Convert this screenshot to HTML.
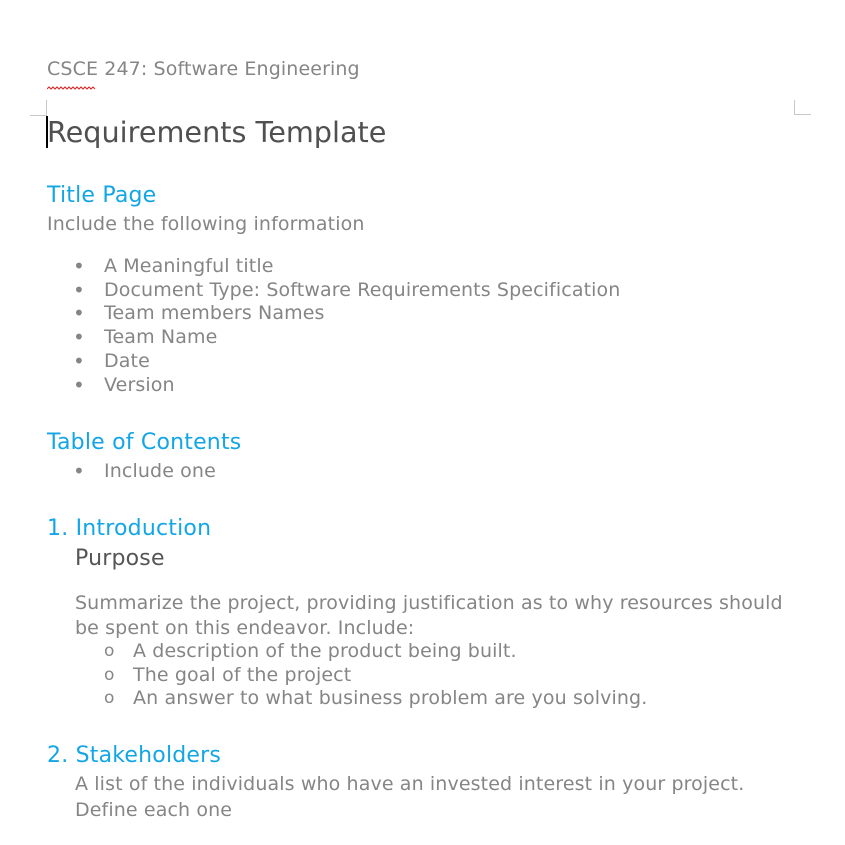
<!DOCTYPE html>
<html><head><meta charset="utf-8"><style>
html,body{margin:0;padding:0;background:#fff;width:845px;height:845px;overflow:hidden;position:relative}
div.t{position:absolute;white-space:nowrap;font-family:"DejaVu Sans","Liberation Sans",sans-serif;font-size:19px;letter-spacing:0.12px;line-height:24px;height:24px;color:#858585}
.h{color:#13a6e6!important;font-size:22px!important;letter-spacing:0.2px!important;line-height:28px!important;height:28px!important}
.b{font-size:20px!important;letter-spacing:0!important}
</style></head><body>
<div class="t" style="left:47px;top:57px">CSCE 247: Software Engineering</div>
<svg style="position:absolute;left:47px;top:85px" width="50" height="6"><path d="M0 4 L2 2 L4 4 L6 2 L8 4 L10 2 L12 4 L14 2 L16 4 L18 2 L20 4 L22 2 L24 4 L26 2 L28 4 L30 2 L32 4 L34 2 L36 4 L38 2 L40 4 L42 2 L44 4 L46 2 L48 4" stroke="#e02020" stroke-width="1" fill="none"/></svg>
<div style="position:absolute;left:46px;top:100px;width:1px;height:16px;background:#c8c8c8"></div>
<div style="position:absolute;left:30px;top:115px;width:16px;height:1px;background:#c8c8c8"></div>
<div style="position:absolute;left:794px;top:100px;width:1px;height:15px;background:#c8c8c8"></div>
<div style="position:absolute;left:795px;top:114px;width:16px;height:1px;background:#c8c8c8"></div>
<div style="position:absolute;left:46px;top:116px;width:2px;height:32px;background:#000"></div>
<div class="t" style="left:47px;top:113px;font-size:28.7px;letter-spacing:0;line-height:38px;height:38px;color:#505050">Requirements Template</div>
<div class="t h" style="left:47px;top:182px">Title Page</div>
<div class="t" style="left:47px;top:212px">Include the following information</div>
<div class="t b" style="left:73px;top:254px">•</div><div class="t" style="left:104px;top:254px">A Meaningful title</div>
<div class="t b" style="left:73px;top:278px">•</div><div class="t" style="left:104px;top:278px">Document Type: Software Requirements Specification</div>
<div class="t b" style="left:73px;top:301px">•</div><div class="t" style="left:104px;top:301px">Team members Names</div>
<div class="t b" style="left:73px;top:325px">•</div><div class="t" style="left:104px;top:325px">Team Name</div>
<div class="t b" style="left:73px;top:349px">•</div><div class="t" style="left:104px;top:349px">Date</div>
<div class="t b" style="left:73px;top:373px">•</div><div class="t" style="left:104px;top:373px">Version</div>
<div class="t h" style="left:47px;top:429px">Table of Contents</div>
<div class="t b" style="left:73px;top:459px">•</div><div class="t" style="left:104px;top:459px">Include one</div>
<div class="t h" style="left:47px;top:515px">1. Introduction</div>
<div class="t" style="left:75px;top:545px;font-size:22px;letter-spacing:0.2px;line-height:28px;height:28px;color:#555">Purpose</div>
<div class="t" style="left:75px;top:591px">Summarize the project, providing justification as to why resources should</div>
<div class="t" style="left:75px;top:616px">be spent on this endeavor. Include:</div>
<div class="t" style="left:104px;top:639px;font-size:17px;letter-spacing:0">o</div><div class="t" style="left:133px;top:639px">A description of the product being built.</div>
<div class="t" style="left:104px;top:663px;font-size:17px;letter-spacing:0">o</div><div class="t" style="left:133px;top:663px">The goal of the project</div>
<div class="t" style="left:104px;top:686px;font-size:17px;letter-spacing:0">o</div><div class="t" style="left:133px;top:686px">An answer to what business problem are you solving.</div>
<div class="t h" style="left:47px;top:742px">2. Stakeholders</div>
<div class="t" style="left:75px;top:772px">A list of the individuals who have an invested interest in your project.</div>
<div class="t" style="left:75px;top:798px">Define each one</div>
</body></html>
